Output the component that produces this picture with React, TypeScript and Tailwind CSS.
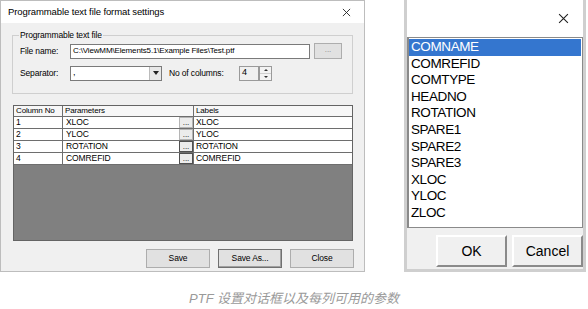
import React from "react";

const rows = [
  { no: "1", param: "XLOC", label: "XLOC" },
  { no: "2", param: "YLOC", label: "YLOC" },
  { no: "3", param: "ROTATION", label: "ROTATION" },
  { no: "4", param: "COMREFID", label: "COMREFID" },
];

const items = [
  "COMNAME",
  "COMREFID",
  "COMTYPE",
  "HEADNO",
  "ROTATION",
  "SPARE1",
  "SPARE2",
  "SPARE3",
  "XLOC",
  "YLOC",
  "ZLOC",
];

function CloseX({ size = 10 }: { size?: number }) {
  return (
    <svg width={size} height={size} viewBox="0 0 10 10">
      <path d="M1 1L9 9M9 1L1 9" stroke="#222" strokeWidth="1" />
    </svg>
  );
}

function WinButton({ label, w, strong }: { label: string; w: string; strong?: boolean }) {
  return (
    <button
      className={`${w} h-[19px] bg-[#e1e1e1] border ${
        strong ? "border-[#707070] shadow-[inset_-1px_-1px_0_#a0a0a0]" : "border-[#adadad]"
      } text-[8.5px] tracking-[-0.15px] text-black flex items-center justify-center`}
    >
      {label}
    </button>
  );
}

function FormatDialog() {
  return (
    <div className="w-[365px] h-[272px] border border-[#bdbdbd] bg-[#f0f0f0] flex flex-col">
      {/* title bar */}
      <div className="h-[22px] bg-white flex items-center justify-between pl-[7px] pr-[13px]">
        <span className="text-[9.5px] tracking-[-0.1px] text-black">Programmable text file format settings</span>
        <CloseX size={9} />
      </div>

      <div className="flex-1 flex flex-col pl-[11px] pr-[10px]">
        {/* group box */}
        <fieldset className="mt-[7px] w-[341px] h-[64px] border border-[#cfcfcf] pl-[7px] pr-[10px]">
          <legend className="ml-[-1px] px-[1px] text-[8.5px] tracking-[-0.15px] leading-[10px] text-black">
            Programmable text file
          </legend>
          <div className="mt-[3px] flex items-center h-[16px]">
            <span className="w-[50px] text-[8.5px] tracking-[-0.15px] text-black">File name:</span>
            <div className="w-[240px] h-[15px] bg-white border border-[#7a7a7a] flex items-center px-[2px] text-[8px] tracking-[-0.15px] text-black">
              C:\ViewMM\Elements5.1\Example Files\Test.ptf
            </div>
            <div className="ml-[4px] w-[28px] h-[16px] bg-[#e1e1e1] border border-[#adadad] flex items-center justify-center text-[8px] text-[#888] leading-none pb-[3px]">
              ...
            </div>
          </div>
          <div className="mt-[6px] flex items-center h-[16px]">
            <span className="w-[50px] text-[8.5px] tracking-[-0.15px] text-black">Separator:</span>
            <div className="w-[92px] h-[15px] bg-white border border-[#7a7a7a] flex items-center justify-between pl-[2px] text-[9px] text-black">
              <span>,</span>
              <div className="w-[12px] h-[13px] bg-[#e8e8e8] border-l border-[#bbb] flex items-center justify-center">
                <svg width="6" height="4" viewBox="0 0 6 4">
                  <path d="M0 0H6L3 4Z" fill="#222" />
                </svg>
              </div>
            </div>
            <span className="ml-[7px] w-[70px] text-[8.5px] tracking-[-0.15px] text-black">No of columns:</span>
            <div className="w-[20px] h-[15px] bg-[#f0f0f0] border border-[#9a9a9a] flex items-center px-[2px] text-[9px] text-black">
              4
            </div>
            <div className="w-[13px] h-[15px] flex flex-col border border-[#9a9a9a] bg-[#f3f3f3]">
              <div className="flex-1 flex items-center justify-center border-b border-[#cfcfcf]">
                <svg width="4" height="2" viewBox="0 0 4 2">
                  <path d="M0 2H4L2 0Z" fill="#333" />
                </svg>
              </div>
              <div className="flex-1 flex items-center justify-center">
                <svg width="4" height="2" viewBox="0 0 4 2">
                  <path d="M0 0H4L2 2Z" fill="#333" />
                </svg>
              </div>
            </div>
          </div>
        </fieldset>

        {/* grid */}
        <div className="mt-[11px] ml-[1px] w-[340px] h-[136px] bg-[#808080] border border-[#646464] flex flex-col">
          <div className="h-[11px] flex bg-[#f7f7f7] border-b border-[#6e6e6e] text-[8px] tracking-[-0.15px] leading-[10px] text-black">
            <div className="w-[49px] border-r border-[#6e6e6e] pl-[2px]">Column No</div>
            <div className="w-[131px] border-r border-[#6e6e6e] pl-[2px]">Parameters</div>
            <div className="flex-1 pl-[2px]">Labels</div>
          </div>
          {rows.map((r) => (
            <div
              key={r.no}
              className="h-[12px] flex bg-white border-b border-[#6e6e6e] text-[8.5px] tracking-[-0.1px] leading-[11px] text-black"
            >
              <div className="w-[49px] border-r border-[#6e6e6e] pl-[2px]">{r.no}</div>
              <div className="w-[131px] border-r border-[#6e6e6e] flex justify-between">
                <span className="pl-[3px]">{r.param}</span>
                <span
                  className={`w-[14px] h-[11px] bg-[#ececec] border ${
                    r.no === "3" || r.no === "4" ? "border-[#505050]" : "border-[#b5b5b5]"
                  } text-[8px] leading-[8px] text-black flex items-end justify-center`}
                >
                  ...
                </span>
              </div>
              <div className="flex-1 pl-[2px]">{r.label}</div>
            </div>
          ))}
        </div>

        {/* buttons */}
        <div className="mt-[8px] flex justify-end gap-[8px]">
          <WinButton label="Save" w="w-[64px]" />
          <WinButton label="Save As..." w="w-[64px]" strong />
          <WinButton label="Close" w="w-[64px]" />
        </div>
      </div>
    </div>
  );
}

function ColumnPicker() {
  return (
    <div className="w-[182px] h-[272px] border-[3px] border-t-0 border-[#cfcfcf] bg-[#f0f0f0] flex flex-col">
      <div className="h-[37px] bg-white flex items-center justify-end pr-[14px]">
        <CloseX size={11} />
      </div>
      <div className="h-[191px] bg-white border border-[#8a8a8a] border-l-[2px] flex flex-col pt-[1px]">
        {items.map((it, i) => (
          <div
            key={it}
            className={`h-[16.6px] pl-[2px] mr-[1px] text-[13.5px] tracking-[-0.4px] leading-[16.6px] ${
              i === 0 ? "bg-[#3476cf] text-white" : "text-black"
            }`}
          >
            {it}
          </div>
        ))}
      </div>
      <div className="flex justify-end gap-[5px] pt-[7px]">
        <div className="w-[71px] h-[32px] bg-[#f0f0f0] border-t-[2px] border-l-[2px] border-white border-b-[2px] border-r-[2px] border-b-[#8a8a8a] border-r-[#8a8a8a] flex items-center justify-center text-[14px] text-black">
          OK
        </div>
        <div className="w-[71px] h-[32px] bg-[#f0f0f0] border-t-[2px] border-l-[2px] border-white border-b-[2px] border-r-[2px] border-b-[#8a8a8a] border-r-[#8a8a8a] flex items-center justify-center text-[14px] text-black">
          Cancel
        </div>
      </div>
    </div>
  );
}

export default function App() {
  return (
    <div
      className="w-[588px] h-[309px] bg-white flex flex-col"
      style={{ fontFamily: '"Liberation Sans", Arial, sans-serif' }}
    >
      <div className="flex">
        <FormatDialog />
        <div className="ml-[39px]">
          <ColumnPicker />
        </div>
      </div>
      <div
        className="mt-[17px] text-center italic text-[13px] text-[#9a9a9a]"
        style={{ fontFamily: '"Liberation Sans", "Noto Sans CJK SC", sans-serif' }}
      >
        PTF 设置对话框以及每列可用的参数
      </div>
    </div>
  );
}
